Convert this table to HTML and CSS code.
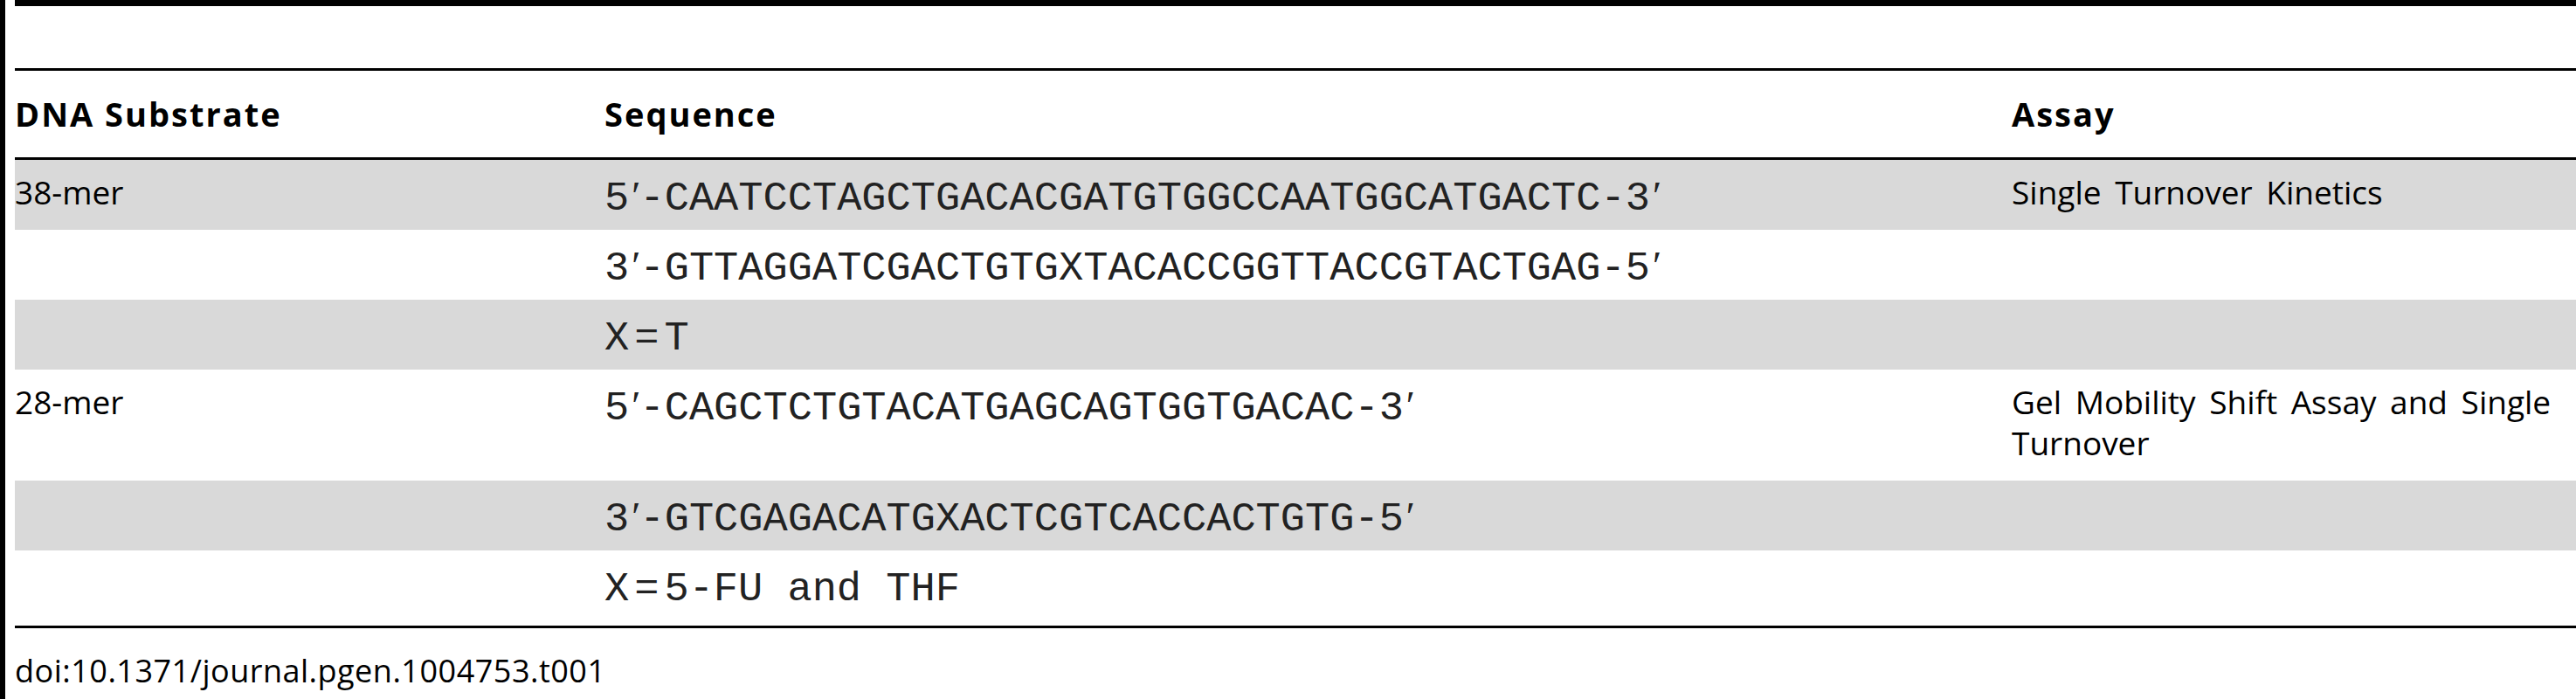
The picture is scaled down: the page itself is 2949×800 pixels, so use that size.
FILE: index.html
```html
<!DOCTYPE html>
<html lang="en">
<head>
<meta charset="utf-8">
<title>Table 1</title>
<link rel="stylesheet" href="styles.css">
</head>
<body>
<div class="page">
  <div class="frame">
    <table class="tbl">
      <colgroup><col class="c1"><col class="c2"><col class="c3"></colgroup>
      <thead>
        <tr><th>DNA Substrate</th><th>Sequence</th><th>Assay</th></tr>
      </thead>
      <tbody>
        <tr class="shade">
          <td>38-mer</td>
          <td class="seq">5<span class="pr">′</span>-CAATCCTAGCTGACACGATGTGGCCAATGGCATGACTC-3<span class="pr">′</span></td>
          <td>Single Turnover Kinetics</td>
        </tr>
        <tr>
          <td></td>
          <td class="seq">3<span class="pr">′</span>-GTTAGGATCGACTGTGXTACACCGGTTACCGTACTGAG-5<span class="pr">′</span></td>
          <td></td>
        </tr>
        <tr class="shade">
          <td></td>
          <td class="seq">X<span class="eq">=</span>T</td>
          <td></td>
        </tr>
        <tr>
          <td>28-mer</td>
          <td class="seq">5<span class="pr">′</span>-CAGCTCTGTACATGAGCAGTGGTGACAC-3<span class="pr">′</span></td>
          <td>Gel Mobility Shift Assay and Single Turnover</td>
        </tr>
        <tr class="shade">
          <td></td>
          <td class="seq">3<span class="pr">′</span>-GTCGAGACATGXACTCGTCACCACTGTG-5<span class="pr">′</span></td>
          <td></td>
        </tr>
        <tr class="last">
          <td></td>
          <td class="seq">X<span class="eq">=</span>5-FU and THF</td>
          <td></td>
        </tr>
      </tbody>
    </table>
    <p class="doi">doi:10.1371/journal.pgen.1004753.t001</p>
  </div>
</div>
</body>
</html>
```

FILE: styles.css
```css
html, body {
  margin: 0;
  padding: 0;
  background: #fff;
  overflow: hidden;
}

.page {
  border-left: 6px solid #000;
  padding-left: 11px;
  height: 800px;
  box-sizing: border-box;
  font-family: "Open Sans", "Liberation Sans", sans-serif;
  color: #000;
}

.frame {
  border-top: 7px solid #000;
  padding-top: 71px;
}

.tbl {
  width: 2932px;
  table-layout: fixed;
  border-collapse: separate;
  border-spacing: 0;
  border-top: 3px solid #000;
  border-bottom: 3px solid #000;
}

.c1 { width: 675px; }
.c2 { width: 1611px; }
.c3 { width: 646px; }

.tbl th {
  text-align: left;
  vertical-align: top;
  font-weight: 700;
  font-size: 38px;
  letter-spacing: 2px;
  line-height: 48px;
  padding: 25px 0 26px 0;
  border-bottom: 3px solid #000;
}

.tbl td {
  text-align: left;
  vertical-align: top;
  font-size: 37px;
  line-height: 47px;
  word-spacing: 6px;
  padding: 13px 0 20px 0;
}

.tbl td.seq {
  font-family: "Liberation Mono", "DejaVu Sans Mono", monospace;
  font-size: 47px;
  word-spacing: 0;
  color: #222;
  padding: 21px 0 12px 0;
}

.tbl tr.shade td {
  background: #d9d9d9;
}

.tbl tr.last td {
  padding-bottom: 26px;
}

.tbl tr.last td.seq {
  padding-bottom: 18px;
}

.pr {
  font-family: "Liberation Serif", "DejaVu Serif", serif;
  font-style: italic;
  line-height: 0;
  padding-right: 2px;
}

.eq {
  margin: 0 6px;
}

.doi {
  margin: 25px 0 0 0;
  font-size: 36px;
  line-height: 48px;
  letter-spacing: 0.5px;
}
```
